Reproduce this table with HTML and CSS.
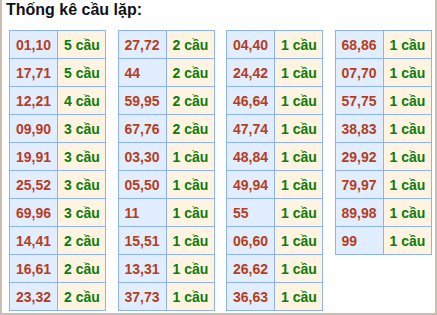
FILE: index.html
```html
<!DOCTYPE html>
<html lang="vi">
<head>
<meta charset="utf-8">
<title>Thống kê cầu lặp</title>
<link rel="stylesheet" href="styles.css">
</head>
<body>
<div class="box">
  <div class="title">Thống kê cầu lặp:</div>
  <div class="grid">
    <table class="tk">
      <tr><td class="num">01,10</td><td class="cnt">5 cầu</td></tr>
      <tr><td class="num">17,71</td><td class="cnt">5 cầu</td></tr>
      <tr><td class="num">12,21</td><td class="cnt">4 cầu</td></tr>
      <tr><td class="num">09,90</td><td class="cnt">3 cầu</td></tr>
      <tr><td class="num">19,91</td><td class="cnt">3 cầu</td></tr>
      <tr><td class="num">25,52</td><td class="cnt">3 cầu</td></tr>
      <tr><td class="num">69,96</td><td class="cnt">3 cầu</td></tr>
      <tr><td class="num">14,41</td><td class="cnt">2 cầu</td></tr>
      <tr><td class="num">16,61</td><td class="cnt">2 cầu</td></tr>
      <tr><td class="num">23,32</td><td class="cnt">2 cầu</td></tr>
    </table>
    <table class="tk">
      <tr><td class="num">27,72</td><td class="cnt">2 cầu</td></tr>
      <tr><td class="num">44</td><td class="cnt">2 cầu</td></tr>
      <tr><td class="num">59,95</td><td class="cnt">2 cầu</td></tr>
      <tr><td class="num">67,76</td><td class="cnt">2 cầu</td></tr>
      <tr><td class="num">03,30</td><td class="cnt">1 cầu</td></tr>
      <tr><td class="num">05,50</td><td class="cnt">1 cầu</td></tr>
      <tr><td class="num">11</td><td class="cnt">1 cầu</td></tr>
      <tr><td class="num">15,51</td><td class="cnt">1 cầu</td></tr>
      <tr><td class="num">13,31</td><td class="cnt">1 cầu</td></tr>
      <tr><td class="num">37,73</td><td class="cnt">1 cầu</td></tr>
    </table>
    <table class="tk">
      <tr><td class="num">04,40</td><td class="cnt">1 cầu</td></tr>
      <tr><td class="num">24,42</td><td class="cnt">1 cầu</td></tr>
      <tr><td class="num">46,64</td><td class="cnt">1 cầu</td></tr>
      <tr><td class="num">47,74</td><td class="cnt">1 cầu</td></tr>
      <tr><td class="num">48,84</td><td class="cnt">1 cầu</td></tr>
      <tr><td class="num">49,94</td><td class="cnt">1 cầu</td></tr>
      <tr><td class="num">55</td><td class="cnt">1 cầu</td></tr>
      <tr><td class="num">06,60</td><td class="cnt">1 cầu</td></tr>
      <tr><td class="num">26,62</td><td class="cnt">1 cầu</td></tr>
      <tr><td class="num">36,63</td><td class="cnt">1 cầu</td></tr>
    </table>
    <table class="tk">
      <tr><td class="num">68,86</td><td class="cnt">1 cầu</td></tr>
      <tr><td class="num">07,70</td><td class="cnt">1 cầu</td></tr>
      <tr><td class="num">57,75</td><td class="cnt">1 cầu</td></tr>
      <tr><td class="num">38,83</td><td class="cnt">1 cầu</td></tr>
      <tr><td class="num">29,92</td><td class="cnt">1 cầu</td></tr>
      <tr><td class="num">79,97</td><td class="cnt">1 cầu</td></tr>
      <tr><td class="num">89,98</td><td class="cnt">1 cầu</td></tr>
      <tr><td class="num">99</td><td class="cnt">1 cầu</td></tr>
    </table>
  </div>
</div>
</body>
</html>
```
FILE: styles.css
```css
html, body {
  margin: 0;
  padding: 0;
  background: #ffffff;
}

body {
  font-family: "Liberation Sans", Arial, sans-serif;
}

.box {
  box-sizing: border-box;
  width: 437px;
  height: 315px;
  border-left: 2px solid #c9beb1;
  border-right: 2px solid #c9beb1;
  border-bottom: 2px solid #c9beb1;
  padding-top: 1px;
}

.title {
  font-size: 16px;
  font-weight: bold;
  line-height: 18px;
  color: #111111;
  padding-left: 4px;
}

.grid {
  display: flex;
  align-items: flex-start;
  gap: 11.5px;
  padding-left: 7px;
  margin-top: 11px;
}

.tk {
  border-collapse: collapse;
  width: 97px;
  table-layout: fixed;
}

.tk td {
  border: 1px solid #8fb3f2;
  height: 28px;
  padding: 0 0 0 6px;
  box-sizing: border-box;
  font-size: 14px;
  font-weight: bold;
  line-height: 16px;
  vertical-align: middle;
  white-space: nowrap;
}

.tk .num {
  width: 48px;
  background: #e1eeff;
  color: #b73d1c;
}

.tk .cnt {
  width: 48px;
  background: #fff4e1;
  color: #0b7c0b;
}
```
